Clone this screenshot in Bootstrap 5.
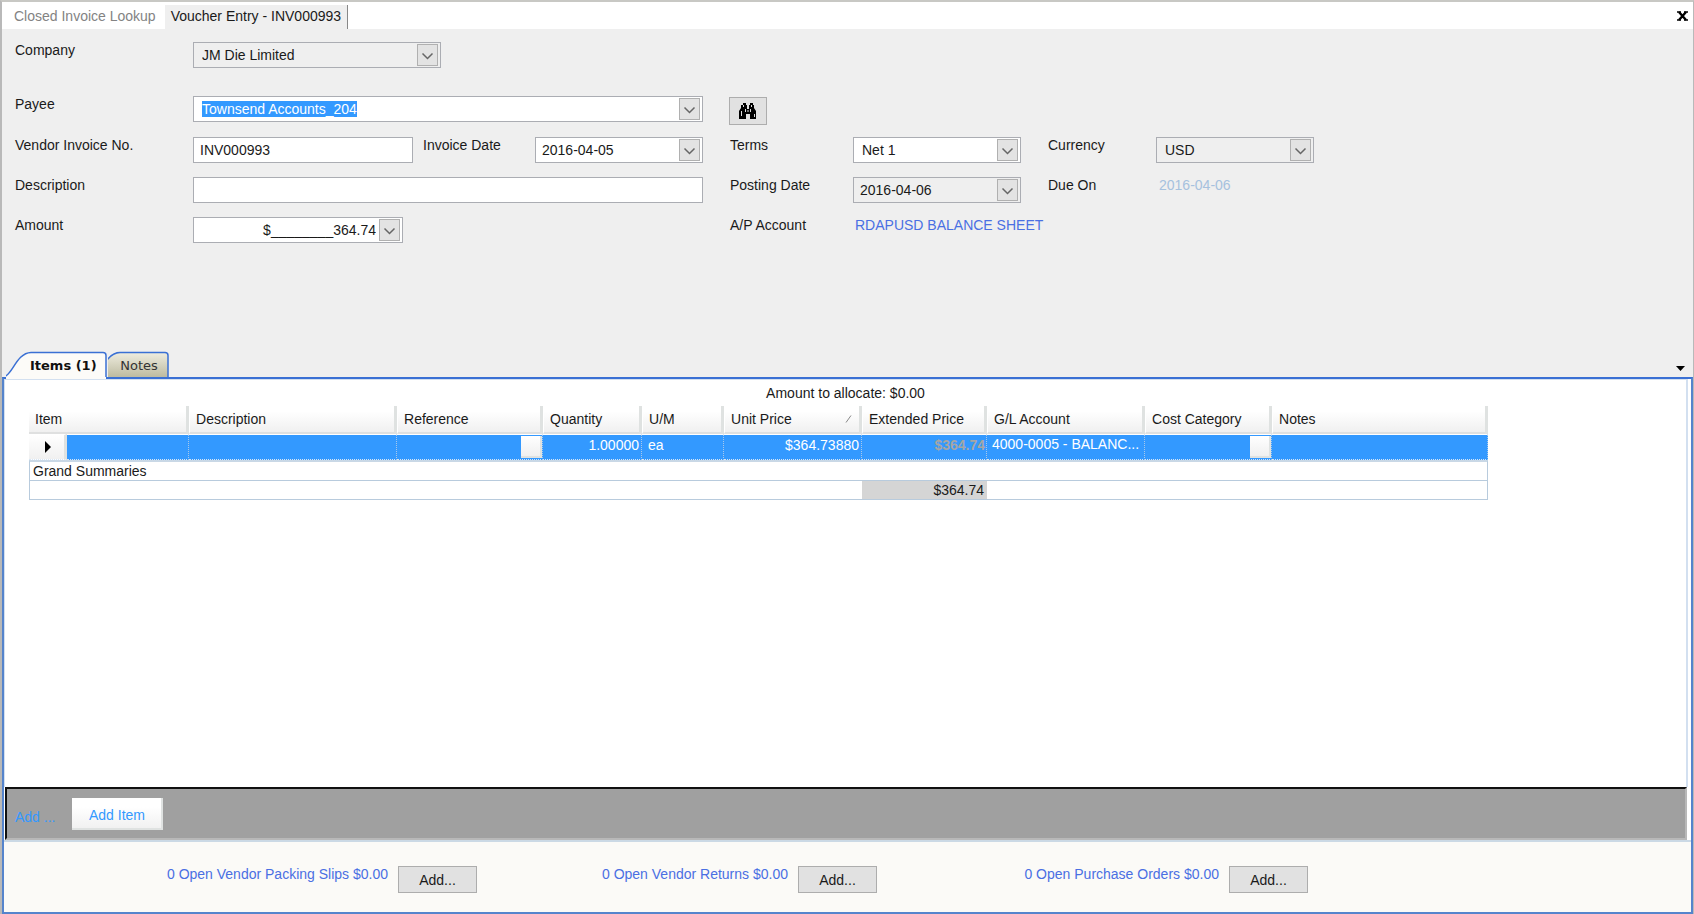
<!DOCTYPE html>
<html lang="en">
<head>
<meta charset="utf-8">
<meta name="viewport" content="width=device-width, initial-scale=1">
<title>Voucher Entry - INV000993</title>
<link href="https://cdn.jsdelivr.net/npm/bootstrap@5.3.0/dist/css/bootstrap.min.css" rel="stylesheet">
<style>
  body { font-family: "Liberation Sans", Arial, sans-serif; font-size: 14px; line-height: 18px; color: #1a1a1a; background: #efefef; }
  a { color: #4a6fe3; text-decoration: none; }
  .app-window { border: 2px solid #b9b9b9; border-top-color: #c8c8c4; border-right-width: 1px; border-bottom: 0; }

  .doc-tabs { height: 27px; background: #fff; }
  .doc-tab { border: 0; background: transparent; color: #838383; padding: 0 9px 0 12px; height: 27px; }
  .doc-tab.active { background: #efefef; color: #1a1a1a; padding: 0 6px; border-right: 1px solid #888; margin-top: 3px; height: 24px; padding-bottom: 3px; }
  .icon-btn { border: 0; background: transparent; padding: 0; line-height: 0; }

  .voucher-form { display: grid; grid-template-columns: 178px 230px 112px 195px 123px 195px 108px 158px; grid-template-rows: 54px 41px 40px 40px 134px; padding: 13px 13px 0; justify-content: start; align-items: start; }
  .voucher-form > label, .voucher-form > span, .voucher-form > a { margin-top: -1px; }
  .field { width: 100%; height: 26px; border: 1px solid #abadb3; border-radius: 0; background-color: #fff; color: #1a1a1a; padding: 1px 6px; outline: 0; appearance: none; }
  .combo { background-repeat: no-repeat; background-position: right 2px center; padding-right: 26px;
    background-image: url("data:image/svg+xml,%3Csvg xmlns='http://www.w3.org/2000/svg' width='21' height='22'%3E%3Crect x='.5' y='.5' width='20' height='21' fill='%23e3e3e3' stroke='%23b0b0b0'/%3E%3Cpath d='M5.500 9.500l5 5 5-5' fill='none' stroke='%23666' stroke-width='1.500'/%3E%3C/svg%3E"); }
  .combo-pad { padding-left: 8px; }
  .locked { background-color: #efefef; opacity: 1; }
  .span-3 { grid-column: span 3; }
  .w-a { width: 248px; } .w-b { width: 220px; } .w-c { width: 510px; } .w-d { width: 168px; } .w-e { width: 210px; }
  .payee::selection { background: #3399ff; color: #fff; }
  .find-btn { width: 38px; height: 28px; border: 1px solid #adadad; background: #e1e1e1; padding: 0; margin-left: -1px; margin-top: 1px; line-height: 0; }
  .due { color: #a6c1de; padding-left: 3px; }
  .account-link { padding-left: 2px; }

  .page-tabs { height: 26px; font-family: "DejaVu Sans", Verdana, sans-serif; font-size: 13px; }
  .page-tab { position: relative; border: 0; background: transparent; padding: 4px 0 0; height: 26px; color: #333; }
  .page-tab svg { position: absolute; left: 0; top: 0; z-index: 0; }
  .page-tab span { position: relative; }
  .tab-items { width: 102px; padding-left: 24px; font-weight: bold; color: #111; z-index: 2; }
  .tab-notes { width: 62px; }

  .items-panel { border: 2px solid #5584cc; border-top-color: #3a70d4; background: #fff; }
  .panel-body { border: 1px solid #d3e0f0; border-right-width: 2px; border-bottom: 0; margin-right: 3px; padding-bottom: 40px; }
  .items-table { width: 1459px; margin-left: 24px; table-layout: fixed; border-collapse: separate; border-spacing: 0; }
  .items-table th { height: 28px; padding: 0 6px; font-weight: normal; background: linear-gradient(#fff 20%, #f0f0f0); border-right: 3px solid #dfe2e1; border-bottom: 2px solid #dfe0e0; white-space: nowrap; }
  .items-table th + th { border-left: 1px solid #fff; }
  .current td { height: 24px; padding: 0 2px 4px 3px; background: #3399ff; color: #fff; border-top: 1px solid #fff; border-right: 1px dotted #a8c8ea; border-bottom: 1px dotted #d8e6f5; white-space: nowrap; }
  .current .row-head { background: linear-gradient(#fff, #f0f0f0); border-right: 3px solid #dfe2e1; padding: 0 0 0 15px; line-height: 0; }
  .current .with-btn { padding: 0; }
  .current .unit { padding-left: 6px; }
  .current .extended { color: #a6a6a6; font-weight: bold; padding-right: 1px; }
  .current .account { padding: 0 0 6px 5px; }
  .cell-btn { display: block; width: 21px; height: 22px; margin-left: auto; border: 0; border-right: 2px solid #dfe2e1; border-bottom: 2px solid #dfe2e1; background: linear-gradient(#fff, #f0f0f0); }
  .sum td { height: 19px; line-height: 17px; padding: 0 3px; border-bottom: 1px solid #b8cbdd; }
  .sum td:first-child { border-left: 1px solid #b8cbdd; }
  .sum td:last-child { border-right: 1px solid #b8cbdd; }
  .sum-title td { height: 21px; border-top: 2px solid #c9d8e6; }
  .sum .total { background: #d5d5d5; }

  .add-bar { background: #a0a0a0; border: 2px solid #101010; border-right: 2px solid #b8b8b8; border-bottom-color: #b8b8b8; height: 53px; margin: 0 4px 0 1px; padding: 9px 0 0 8px; gap: 17px; color: #3399ff; }
  .add-bar span { padding-top: 10px; }
  .add-item { width: 91px; height: 32px; border: 0; border-right: 2px solid #dfe2e1; border-bottom: 2px solid #dfe2e1; background: linear-gradient(#fff 30%, #f1f1f1); color: #3399ff; padding: 4px 0 0; }
  .open-bar { display: grid; grid-template-columns: 473px 400px 431px; height: 72px; padding-top: 23px; background: #fbfaf7; border-top: 2px solid #cbd9e5; }
  .open-group { display: flex; justify-content: end; align-items: start; gap: 10px; }
  .add-btn { width: 79px; height: 27px; border: 1px solid #adadad; background: #e1e1e1; color: #1a1a1a; padding: 1px 0 0; margin-top: 1px; }
</style>
</head>
<body>
<div class="app-window d-flex flex-column min-vh-100">

  <nav class="doc-tabs d-flex align-items-center" aria-label="Open documents">
    <button type="button" class="doc-tab">Closed Invoice Lookup</button>
    <button type="button" class="doc-tab active">Voucher Entry - INV000993</button>
    <button type="button" class="icon-btn ms-auto me-1" aria-label="Close">
      <svg width="13" height="10" viewBox="0 0 13 10"><path d="M3 1l7 8M10 1L3 9" stroke="#000" stroke-width="2.400"/><path d="M1 1h4M8 1h4M1 9h4M8 9h4" stroke="#000" stroke-width="1.500"/></svg>
    </button>
  </nav>

  <form class="voucher-form">
    <label for="company">Company</label>
    <div class="span-3"><select id="company" class="field combo combo-pad locked w-a"><option>JM Die Limited</option></select></div>
    <span></span><span></span><span></span><span></span>

    <label for="payee">Payee</label>
    <div class="span-3"><input id="payee" class="field combo combo-pad payee w-c" value="Townsend Accounts_204" autocomplete="off"></div>
    <button type="button" class="find-btn" aria-label="Find payee">
      <svg width="20" height="18" viewBox="0 0 20 18"><path d="M5 1h3v2h1v4h2V3h1V1h3v2h1v3l2 3v8h-6v-5H8v5H1V9l2-3V3h2z" fill="#000"/><path d="M5.500 3v2M13.500 3v2M3.500 9v5M7.500 7v3M12.500 7v3M16.500 12v3" stroke="#ddd" stroke-width="1"/><path d="M10 8v2" stroke="#ddd"/></svg>
    </button>
    <span></span><span></span><span></span>

    <label for="invno">Vendor Invoice No.</label>
    <div><input id="invno" class="field w-b" value="INV000993"></div>
    <label for="invdate">Invoice Date</label>
    <div><input id="invdate" class="field combo w-d" value="2016-04-05"></div>
    <label for="terms">Terms</label>
    <div><select id="terms" class="field combo combo-pad w-d"><option>Net 1</option></select></div>
    <label for="currency">Currency</label>
    <div><select id="currency" class="field combo combo-pad locked"><option>USD</option></select></div>

    <label for="desc">Description</label>
    <div class="span-3"><input id="desc" class="field w-c"></div>
    <label for="posting">Posting Date</label>
    <div><input id="posting" class="field combo locked w-d" value="2016-04-06"></div>
    <span>Due On</span>
    <span class="due">2016-04-06</span>

    <label for="amount">Amount</label>
    <div class="span-3"><input id="amount" class="field combo text-end w-e" value="$________364.74"></div>
    <span>A/P Account</span>
    <a href="#" class="account-link text-nowrap">RDAPUSD BALANCE SHEET</a>
  </form>

  <div class="page-tabs d-flex ps-1">
    <button type="button" class="page-tab tab-items text-start">
      <svg width="102" height="28" viewBox="0 0 102 28"><path d="M-1 26C8 21 11 2 25 1.500H97q3 0 3 3V28H-1z" fill="#fcfbf8"/><path d="M-1 25.500C7 22 11 2 25 1.500H97q3 0 3 3V26" fill="none" stroke="#3a70d4" stroke-width="1.500"/></svg>
      <span>Items (1)</span>
    </button>
    <button type="button" class="page-tab tab-notes">
      <svg width="62" height="26" viewBox="0 0 62 26"><defs><linearGradient id="tabFill" x2="0" y2="1"><stop offset="0" stop-color="#efede0"/><stop offset="1" stop-color="#bdbba0"/></linearGradient></defs><path d="M-1 26V9Q5 1.500 12 1.500H57q3 0 3 3V26" fill="url(#tabFill)" stroke="#3a70d4" stroke-width="1.500"/></svg>
      <span>Notes</span>
    </button>
    <button type="button" class="icon-btn ms-auto me-2 pt-2" aria-label="Tab list"><svg width="9" height="5" viewBox="0 0 9 5"><path d="M0 0h9L4.500 5z"/></svg></button>
  </div>

  <section class="items-panel d-flex flex-column flex-grow-1">
    <div class="panel-body flex-grow-1">
      <div class="text-center pt-1">Amount to allocate: $0.00</div>
      <table class="items-table mt-1">
        <colgroup><col style="width:38px"><col style="width:122px"><col style="width:208px"><col style="width:146px"><col style="width:99px"><col style="width:82px"><col style="width:138px"><col style="width:125px"><col style="width:158px"><col style="width:127px"><col style="width:216px"></colgroup>
        <thead>
          <tr><th colspan="2">Item</th><th>Description</th><th>Reference</th><th>Quantity</th><th>U/M</th>
            <th><span class="d-flex justify-content-between align-items-center">Unit Price <svg width="8" height="8" viewBox="0 0 8 8"><path d="M1 7.500L6 .5" stroke="#888"/></svg></span></th>
            <th>Extended Price</th><th>G/L Account</th><th>Cost Category</th><th>Notes</th></tr>
        </thead>
        <tbody>
          <tr class="current">
            <td class="row-head"><svg width="8" height="12" viewBox="0 0 8 12"><path d="M1 0l6 6-6 6z"/></svg></td>
            <td></td><td></td>
            <td class="with-btn"><button type="button" class="cell-btn" aria-label="Pick reference"></button></td>
            <td class="text-end">1.00000</td><td class="unit">ea</td><td class="text-end">$364.73880</td>
            <td class="text-end extended">$364.74</td><td class="account">4000-0005 - BALANC...</td>
            <td class="with-btn"><button type="button" class="cell-btn" aria-label="Pick cost category"></button></td>
            <td></td>
          </tr>
          <tr class="sum sum-title"><td colspan="11">Grand Summaries</td></tr>
          <tr class="sum"><td colspan="7"></td><td class="total text-end">$364.74</td><td colspan="3"></td></tr>
        </tbody>
      </table>
    </div>
    <div class="add-bar d-flex">
      <span>Add ...</span>
      <button type="button" class="add-item">Add Item</button>
    </div>
    <div class="open-bar">
      <div class="open-group"><a href="#">0 Open Vendor Packing Slips $0.00</a><button type="button" class="add-btn">Add...</button></div>
      <div class="open-group"><a href="#">0 Open Vendor Returns $0.00</a><button type="button" class="add-btn">Add...</button></div>
      <div class="open-group"><a href="#">0 Open Purchase Orders $0.00</a><button type="button" class="add-btn">Add...</button></div>
    </div>
  </section>
</div>
<script src="https://cdn.jsdelivr.net/npm/bootstrap@5.3.0/dist/js/bootstrap.bundle.min.js"></script>
<script>
  // The payee is ready to be overtyped when the voucher opens.
  const payee = document.getElementById('payee');
  payee.focus();
  payee.select();
</script>
</body>
</html>
